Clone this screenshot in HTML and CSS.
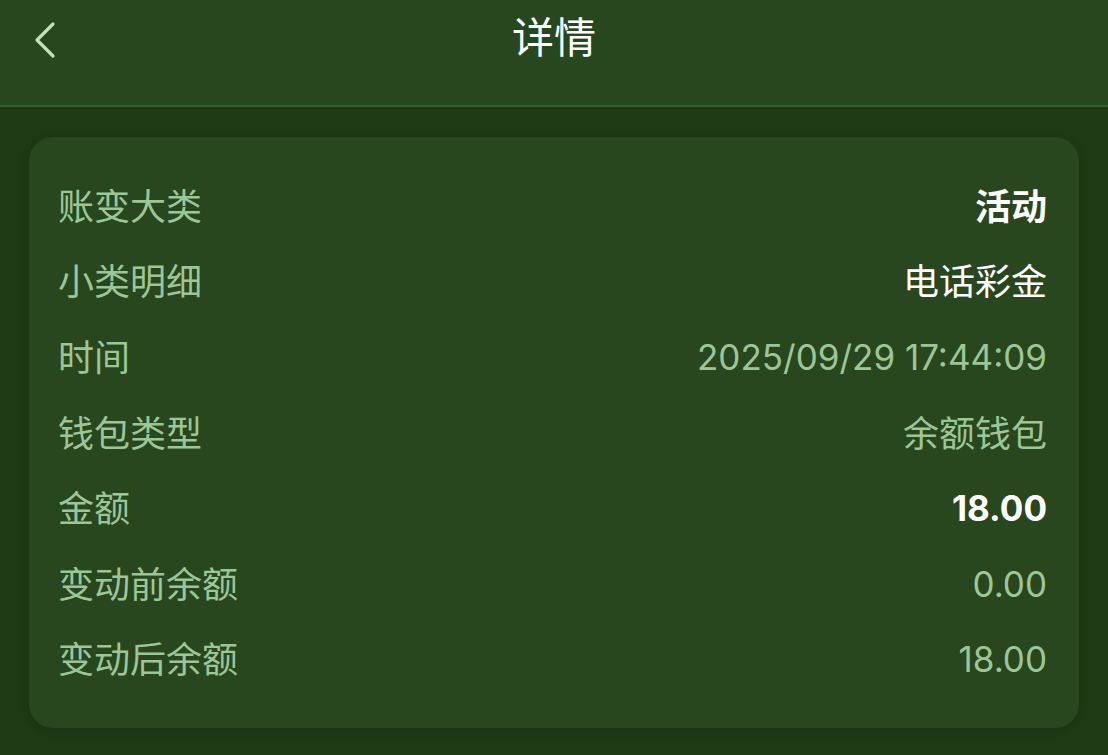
FILE: index.html
```html
<!DOCTYPE html>
<html lang="zh-CN">
<head>
  <meta charset="UTF-8" />
  <meta name="viewport" content="width=device-width, initial-scale=1.0" />
  <title>详情</title>
  <link rel="stylesheet" href="styles.css">
</head>
<body>
  <!-- 顶部导航 -->
  <div class="nav-bar">
    <a class="back" href="#" aria-label="返回">
      <svg width="26" height="38" viewBox="0 0 26 38" fill="none">
        <path d="M21 3 L5 19 L21 35" stroke="#bfe3b8" stroke-width="3.2" stroke-linecap="round" stroke-linejoin="round" />
      </svg>
    </a>
    <h1>详情</h1>
  </div>

  <!-- 账变详情 -->
  <div class="detail-card">
    <div class="row"><span class="label">账变大类</span><span class="value strong">活动</span></div>
    <div class="row"><span class="label">小类明细</span><span class="value white">电话彩金</span></div>
    <div class="row"><span class="label">时间</span><span class="value num">2025/09/29 17:44:09</span></div>
    <div class="row"><span class="label">钱包类型</span><span class="value">余额钱包</span></div>
    <div class="row"><span class="label">金额</span><span class="value strong num">18.00</span></div>
    <div class="row"><span class="label">变动前余额</span><span class="value num">0.00</span></div>
    <div class="row"><span class="label">变动后余额</span><span class="value num">18.00</span></div>
  </div>
</body>
</html>
```

FILE: styles.css
```css
* { box-sizing: border-box; margin: 0; padding: 0; font-family: Inter, "Noto Sans CJK SC", sans-serif; }
body { background-color: #1d3a14; width: 1108px; height: 755px; overflow: hidden; }
.nav-bar { height: 107px; background-color: #27471f; border-bottom: 2px solid #35602b; display: flex; align-items: flex-start; justify-content: center; position: relative; }
.nav-bar h1 { font-size: 42px; font-weight: 400; color: #fff; line-height: 76px; }
.back { position: absolute; left: 32px; top: 21px; display: flex; }
.detail-card { margin: 30px 29px 0; background-color: #28471f; border-radius: 24px; padding: 31px 32px 31px 29px; box-shadow: 0 2px 8px rgba(0, 0, 0, 0.15); }
.row { height: 75.6px; display: flex; align-items: center; justify-content: space-between; padding-bottom: 4px; }
.label { font-size: 36px; color: #9dc697; }
.value { font-size: 36px; color: #9dc697; }
.value.num { font-size: 35px; position: relative; top: 2px; }
.value.white { color: #fff; }
.value.strong { color: #fff; font-weight: 700; }
```
